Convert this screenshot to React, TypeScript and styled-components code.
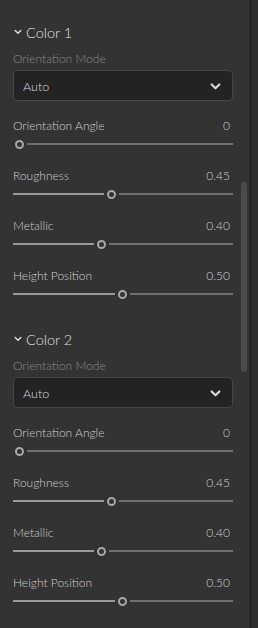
import React from "react";
import styled, { createGlobalStyle } from "styled-components";

const Global = createGlobalStyle`
  html, body { margin: 0; padding: 0; background: #333333; }
  body { font-family: Lato, "Liberation Sans", sans-serif; -webkit-font-smoothing: antialiased; }
  * { box-sizing: border-box; }
`;

const Page = styled.div`
  display: flex;
  width: 258px;
  height: 628px;
  background: #333333;
  overflow: hidden;
`;

const Content = styled.div`
  width: 240px;
  padding: 22px 0 0 13px;
  display: flex;
  flex-direction: column;
  gap: 29px;
`;

const ScrollTrack = styled.div`
  width: 9px;
  padding: 182px 1px 0 1px;
`;

const ScrollThumb = styled.div`
  width: 6px;
  height: 190px;
  border-radius: 3px;
  background: #4b4b4b;
`;

const Divider = styled.div`
  width: 3px;
  background: #262626;
`;

const Rest = styled.div`
  flex: 1;
  background: #2f2f2f;
`;

const Section = styled.section`
  width: 220px;
  display: flex;
  flex-direction: column;
`;

const Header = styled.div`
  height: 20px;
  display: flex;
  align-items: center;
  gap: 4px;
  padding-left: 1px;
  color: #e0e0e0;
  font-size: 14.5px;
  font-weight: 300;
`;

const ModeLabel = styled.div`
  margin-top: 9px;
  height: 16px;
  line-height: 16px;
  font-size: 12px;
  font-weight: 300;
  color: #8a8a8a;
`;

const Select = styled.div`
  margin-top: 3px;
  height: 31px;
  border: 1px solid #464646;
  border-radius: 4px;
  background: #232323;
  display: flex;
  align-items: center;
  justify-content: space-between;
  padding: 2px 11px 0 9px;
  color: #dadada;
  font-size: 12.5px;
  font-weight: 300;
`;

const Rows = styled.div`
  margin-top: 16px;
  display: flex;
  flex-direction: column;
  gap: 17px;
`;

const Row = styled.div`
  display: flex;
  flex-direction: column;
  gap: 5px;
`;

const LabelLine = styled.div`
  height: 16px;
  display: flex;
  justify-content: space-between;
  align-items: center;
  font-size: 12px;
  font-weight: 300;
  color: #cfcfcf;
  padding-right: 3px;
`;

const Track = styled.div`
  height: 12px;
  display: flex;
  align-items: center;
`;

const Filled = styled.div`
  height: 2px;
  background: #9a9a9a;
  flex: none;
`;

const Thumb = styled.div`
  width: 9px;
  height: 9px;
  border-radius: 50%;
  border: 2px solid #a8a8a8;
  background: #333333;
  flex: none;
  margin-right: 3px;
`;

const Remain = styled.div`
  flex: 1;
  height: 2px;
  background: #707070;
`;

const Chevron = ({ size, w }: { size: number; w: number }) => (
  <svg width={size} height={size} viewBox="0 0 10 10">
    <path d="M1.5 3.2 L5 6.6 L8.5 3.2" fill="none" stroke="currentColor" strokeWidth={w} strokeLinecap="round" strokeLinejoin="round" />
  </svg>
);

const Slider = ({ value }: { value: number }) => {
  const thumbLeft = 2 + value * 205.5;
  const filled = Math.max(0, thumbLeft - 3);
  const ml = thumbLeft - filled;
  return (
    <Track>
      <Filled style={{ width: filled }} />
      <Thumb style={{ marginLeft: ml }} />
      <Remain />
    </Track>
  );
};

const rows = [
  { label: "Orientation Angle", value: 0, text: "0" },
  { label: "Roughness", value: 0.45, text: "0.45" },
  { label: "Metallic", value: 0.4, text: "0.40" },
  { label: "Height Position", value: 0.5, text: "0.50" },
];

const ColorSection = ({ title }: { title: string }) => (
  <Section>
    <Header>
      <Chevron size={8} w={1.8} />
      <span>{title}</span>
    </Header>
    <ModeLabel>Orientation Mode</ModeLabel>
    <Select>
      <span>Auto</span>
      <Chevron size={11} w={2} />
    </Select>
    <Rows>
      {rows.map((r) => (
        <Row key={r.label}>
          <LabelLine>
            <span>{r.label}</span>
            <span>{r.text}</span>
          </LabelLine>
          <Slider value={r.value} />
        </Row>
      ))}
    </Rows>
  </Section>
);

export default function App() {
  return (
    <>
      <Global />
      <Page>
        <Content>
          <ColorSection title="Color 1" />
          <ColorSection title="Color 2" />
        </Content>
        <ScrollTrack>
          <ScrollThumb />
        </ScrollTrack>
        <Divider />
        <Rest />
      </Page>
    </>
  );
}
